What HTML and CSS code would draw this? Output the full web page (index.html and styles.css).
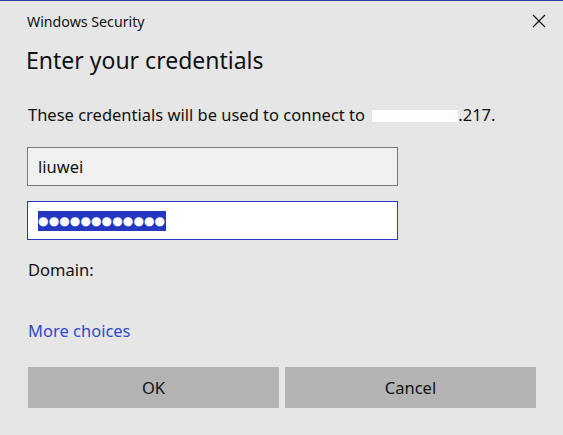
FILE: index.html
```html
<!DOCTYPE html>
<html>
<head>
<meta charset="utf-8">
<link rel="stylesheet" href="styles.css">
</head>
<body>
<div class="dialog">
  <div class="titlebar">
    <span class="app">Windows Security</span>
    <svg class="close" width="14" height="14" viewBox="0 0 14 14"><path d="M1 1 L13 13 M13 1 L1 13" stroke="#111" stroke-width="1.2" fill="none"/></svg>
  </div>
  <h1 class="heading">Enter your credentials</h1>
  <p class="info">These credentials will be used to connect to <span class="redact"></span>.217.</p>
  <div class="field user">liuwei</div>
  <div class="field pass"><span class="sel"><span>●</span><span>●</span><span>●</span><span>●</span><span>●</span><span>●</span><span>●</span><span>●</span><span>●</span><span>●</span><span>●</span><span>●</span></span></div>
  <div class="domain">Domain:</div>
  <a class="more">More choices</a>
  <div class="buttons">
    <div class="btn">OK</div>
    <div class="btn">Cancel</div>
  </div>
</div>
</body>
</html>
```
FILE: styles.css
```css
html, body { margin: 0; padding: 0; }
body {
  background: #e6e6e6;
  width: 563px;
  height: 435px;
  overflow: hidden;
  font-family: "Noto Sans", "Open Sans", sans-serif;
  color: #111;
}
.dialog {
  box-sizing: border-box;
  height: 435px;
  border-top: 1px solid #2b3c9e;
  padding: 0 27px 0 27px;
  display: flex;
  flex-direction: column;
}
.titlebar {
  display: flex;
  justify-content: space-between;
  align-items: center;
  height: 40px;
  margin-right: -12px;
}
.app { font-size: 14.2px; }
.close { margin-right: 2px; }
.heading {
  margin: 2px 0 0 -1px;
  font-weight: normal;
  font-size: 23px;
  line-height: 34px;
}
.info {
  margin: 27px 0 0 1px;
  font-size: 16.5px;
  line-height: 22px;
}
.redact {
  display: inline-block;
  width: 86px;
  height: 12px;
  background: #fdfdfd;
  vertical-align: -1px;
  margin-left: 3px;
}
.field {
  box-sizing: border-box;
  width: 371px;
  height: 39px;
  display: flex;
  align-items: center;
  padding-left: 10px;
  font-size: 16.5px;
}
.user { background: #f0f0f0; border: 1px solid #7a7a7a; margin-top: 21px; }
.pass { background: #fff; border: 1px solid #2839be; margin-top: 15px; }
.sel {
  display: inline-flex;
  align-items: center;
  background: #2337c0;
  color: #fff;
  font-family: "DejaVu Sans", sans-serif;
  font-size: 12px;
  height: 20px;
  width: 128px;
}
.sel span {
  width: 10.6px;
  text-align: center;
  line-height: 20px;
}
.domain {
  margin: 19px 0 0 1px;
  font-size: 16.5px;
  line-height: 22px;
}
.more {
  margin: 39px 0 0 1px;
  font-size: 16.5px;
  color: #2b4bcc;
  line-height: 22px;
}
.buttons {
  display: flex;
  gap: 6px;
  margin-top: 25px;
  margin-left: 1px;
}
.btn {
  width: 251px;
  height: 41px;
  background: #b4b4b4;
  display: flex;
  align-items: center;
  justify-content: center;
  font-size: 16.5px;
}
```
